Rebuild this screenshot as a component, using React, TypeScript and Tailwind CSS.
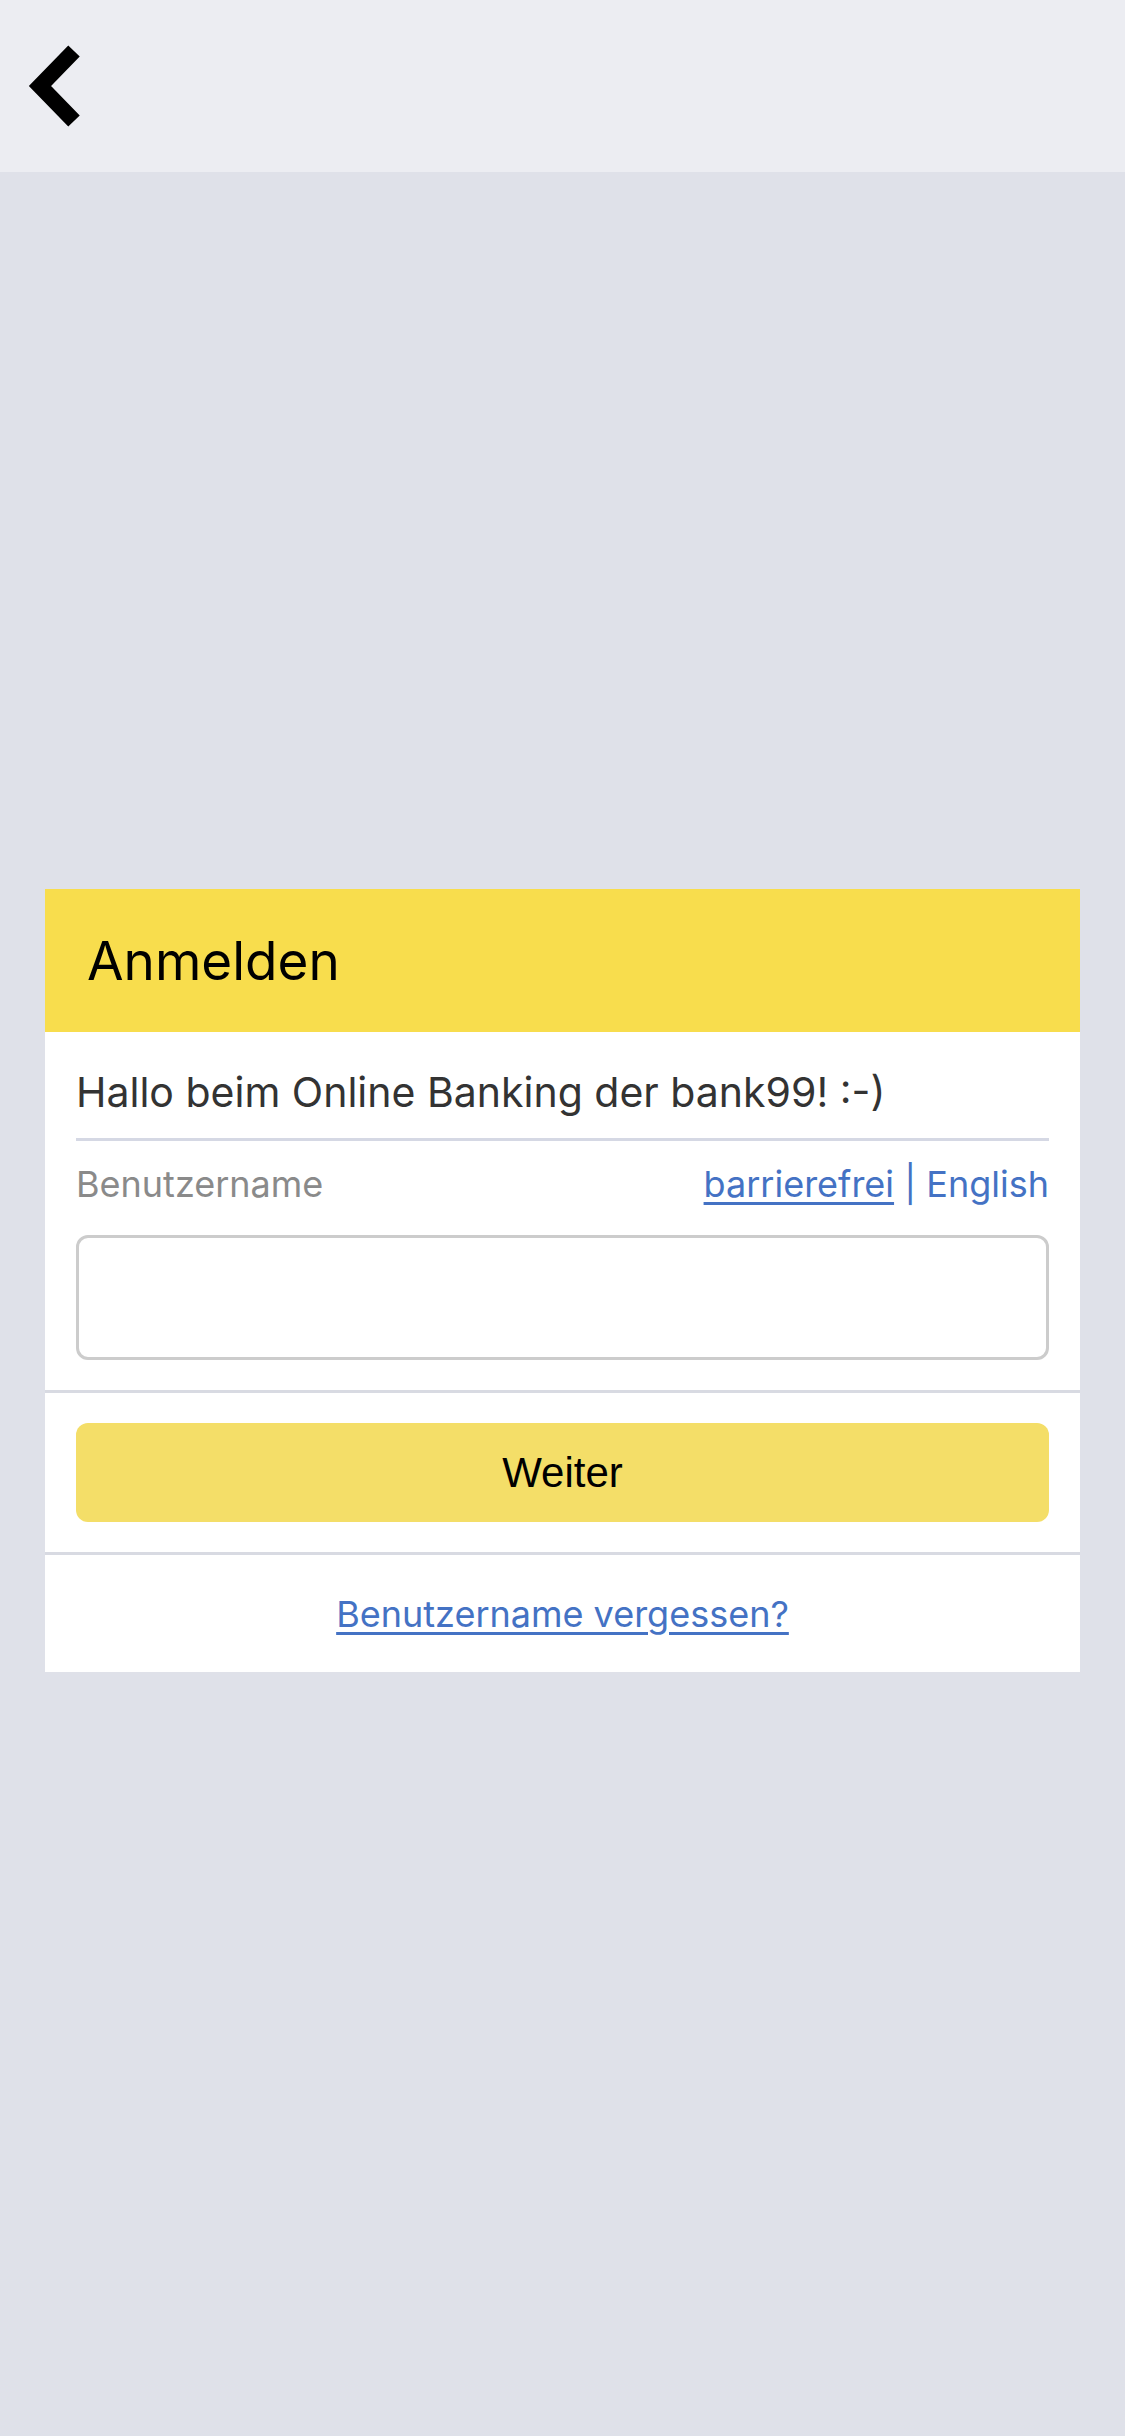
export default function App() {
  const font = { fontFamily: 'Inter, "Noto Sans", sans-serif' };
  return (
    <div className="min-h-[2436px] w-[1125px] bg-[#dfe1e9]" style={font}>
      <header className="h-[172px] bg-[#ecedf2] flex items-center pl-[28px]">
        <svg width="54" height="82" viewBox="0 0 54 82" className="block">
          <path d="M46 6 L12 41 L46 76" fill="none" stroke="#000" strokeWidth="16" strokeLinejoin="miter" />
        </svg>
      </header>
      <main className="pt-[717px] px-[45px]">
        <div className="bg-white">
          <div className="h-[143px] bg-[#f8dd4d] flex items-center px-[42px]">
            <h1 className="text-[53px] leading-none text-black pt-[2px]">Anmelden</h1>
          </div>
          <div className="px-[31px] pt-[36px] pb-[30px]">
            <p className="text-[41px] leading-[48px] text-[#333]">Hallo beim Online Banking der bank99! :-)</p>
            <div className="h-[3px] bg-[#d5d8e4] mt-[22px]" />
            <div className="flex justify-between items-baseline mt-[21px] text-[36px] leading-[44px]">
              <span className="text-[#8a8a8a]">Benutzername</span>
              <span className="text-[#4472c4]">
                <a className="underline decoration-[3px] underline-offset-[5px]">barrierefrei</a> | English
              </span>
            </div>
            <div className="mt-[29px] h-[125px] rounded-[12px] border-[3px] border-[#cccccc] bg-white" />
          </div>
          <div className="h-[3px] bg-[#d8dae2]" />
          <div className="px-[31px] py-[30px]">
            <button className="w-full h-[99px] rounded-[12px] bg-[#f4de68] text-black text-[42px]" style={{ fontFamily: '"Liberation Sans", Arial, sans-serif' }}>
              Weiter
            </button>
          </div>
          <div className="h-[3px] bg-[#d8dae2]" />
          <div className="h-[117px] flex items-center justify-center">
            <a className="text-[36px] text-[#4472c4] underline decoration-[3px] underline-offset-[5px]">Benutzername vergessen?</a>
          </div>
        </div>
      </main>
    </div>
  );
}
